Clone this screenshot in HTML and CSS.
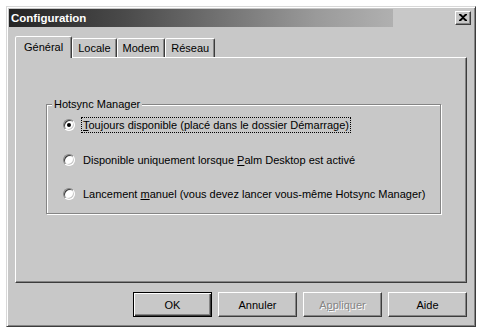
FILE: index.html
```html
<!DOCTYPE html>
<html lang="fr">
<head>
<meta charset="utf-8">
<title>Configuration</title>
<link rel="stylesheet" href="styles.css">
</head>
<body>
<div class="window">
  <div class="titlebar">
    <span class="title">Configuration</span>
    <button class="close" aria-label="Fermer">
      <svg width="8" height="7" viewBox="0 0 8 7"><path d="M0 0h2l2 2 2-2h2v1L5 3.5 8 6v1H6L4 5 2 7H0V6l3-2.5L0 1z" fill="#000"/></svg>
    </button>
  </div>
  <div class="content">
    <div class="tabs">
      <div class="tab active">Général</div>
      <div class="tab">Locale</div>
      <div class="tab">Modem</div>
      <div class="tab">Réseau</div>
    </div>
    <div class="panel">
      <fieldset class="group">
        <legend>Hotsync Manager</legend>
        <div class="option">
          <span class="radio checked"></span>
          <span class="label focus"><u>T</u>oujours disponible (placé dans le dossier Démarrage)</span>
        </div>
        <div class="option">
          <span class="radio"></span>
          <span class="label">Disponible uniquement lorsque <u>P</u>alm Desktop est activé</span>
        </div>
        <div class="option">
          <span class="radio"></span>
          <span class="label">Lancement <u>m</u>anuel (vous devez lancer vous-même Hotsync Manager)</span>
        </div>
      </fieldset>
    </div>
    <div class="buttons">
      <button class="btn default">OK</button>
      <button class="btn">Annuler</button>
      <button class="btn disabled">A<u>p</u>pliquer</button>
      <button class="btn">Aide</button>
    </div>
  </div>
</div>
</body>
</html>
```
FILE: styles.css
```css
* { box-sizing: border-box; }
html, body { margin: 0; padding: 0; background: #fff; }
body {
  font-family: "Liberation Sans", Arial, sans-serif;
  font-size: 11px;
  color: #000;
}
.window {
  margin: 6px 0 0 6px;
  width: 470px;
  height: 321px;
  background: #c8c8c8;
  border: 1px solid;
  border-color: #d8d8d8 #3c3c3c #3c3c3c #d8d8d8;
  box-shadow: inset 1px 1px 0 #fff, inset -1px -1px 0 #858585;
  padding: 2px;
  display: flex;
  flex-direction: column;
}
.titlebar {
  height: 18px;
  display: flex;
  align-items: center;
  justify-content: space-between;
  background: linear-gradient(to right, #242424, #4a4a4a 30%, #9a9a9a 80%, #b0b0b0) no-repeat;
  background-size: 384px 100%;
}
.title {
  color: #fff;
  font-weight: bold;
  font-size: 11.5px;
  padding-left: 2px;
}
.close {
  width: 16px;
  height: 14px;
  margin-right: 2px;
  padding: 0;
  background: #c8c8c8;
  border: 1px solid;
  border-color: #fff #3c3c3c #3c3c3c #fff;
  box-shadow: inset -1px -1px 0 #858585;
  display: flex;
  align-items: center;
  justify-content: center;
}
.close svg { display: block; margin: 0 1px 1px 0; }
.content {
  flex: 1;
  display: flex;
  flex-direction: column;
  padding: 9px 6px 0 6px;
}
.tabs {
  display: flex;
  align-items: flex-end;
  height: 21px;
  position: relative;
  z-index: 1;
}
.tab {
  height: 19px;
  padding: 0 5px;
  line-height: 18px;
  border: 1px solid;
  border-bottom: none;
  border-color: #fff #3c3c3c transparent #fff;
  box-shadow: inset -1px 0 0 #858585;
  border-radius: 2px 2px 0 0;
  background: #c8c8c8;
}
.tab.active {
  height: 22px;
  margin-bottom: -1px;
  padding: 0 8px;
  line-height: 20px;
}
.tab.active + .tab { border-left-color: #fff; }
.panel {
  height: 226px;
  border: 1px solid;
  border-color: #fff #3c3c3c #3c3c3c #fff;
  box-shadow: inset -1px -1px 0 #858585;
  padding: 40px 25px 0 30px;
}
.group {
  margin: 0;
  width: 395px;
  height: 116px;
  border: 1px solid #858585;
  box-shadow: inset 1px 1px 0 #fff, 1px 1px 0 #fff;
  padding: 1px 0 0 16px;
}
.group legend {
  padding: 0 2px;
  margin-left: -11px;
  background: #c8c8c8;
  line-height: 13px;
}
.option {
  display: flex;
  align-items: center;
  height: 34.5px;
}
.option:first-of-type { margin-top: -4px; }
.radio {
  width: 12px;
  height: 12px;
  border-radius: 50%;
  background: #fff;
  border: 1px solid;
  border-color: #858585 #fff #fff #858585;
  box-shadow: inset 1px 1px 0 #3c3c3c, inset -1px -1px 0 #c8c8c8;
  display: flex;
  align-items: center;
  justify-content: center;
  flex: none;
}
.radio.checked::after {
  content: "";
  width: 4px;
  height: 4px;
  border-radius: 50%;
  background: #000;
}
.label {
  margin-left: 6px;
  padding: 1px 1px;
  border: 1px solid transparent;
}
.label.focus { border: 1px dotted #000; }
.buttons {
  display: flex;
  justify-content: flex-end;
  gap: 6px;
  margin-top: 9px;
}
.btn {
  width: 79px;
  height: 25px;
  padding: 0;
  font-family: "Liberation Sans", Arial, sans-serif;
  font-size: 11px;
  font-weight: normal;
  color: #000;
  background: #c8c8c8;
  border: 1px solid;
  border-color: #fff #3c3c3c #3c3c3c #fff;
  box-shadow: inset -1px -1px 0 #858585;
}
.btn.default {
  border: 1px solid #000;
  box-shadow: inset 1px 1px 0 #fff, inset -1px -1px 0 #3c3c3c, inset -2px -2px 0 #858585;
}
.btn.disabled {
  color: #858585;
  text-shadow: 1px 1px 0 #fff;
}
.btn u { text-decoration-color: #858585; }
```
